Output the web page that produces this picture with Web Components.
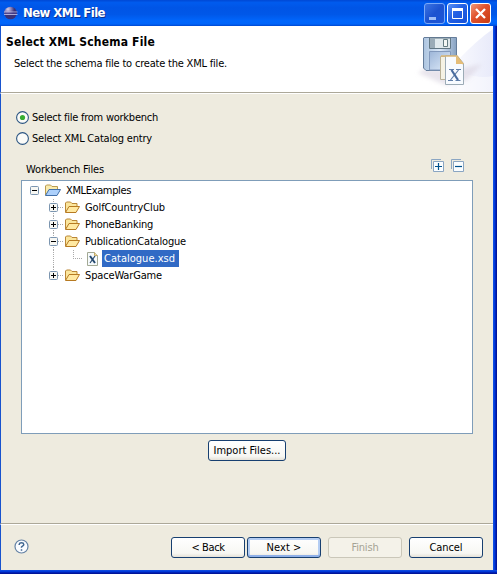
<!DOCTYPE html>
<html lang="en"><head><meta charset="utf-8"><title>New XML File</title>
<style>
body{margin:0;width:497px;height:574px;overflow:hidden;font:11px/14px "DejaVu Sans Condensed","DejaVu Sans",sans-serif;font-stretch:condensed;color:#000}
</style></head><body>
<wizard-window></wizard-window>
<script>
const define=(name,html,init)=>customElements.define(name,class extends HTMLElement{
  connectedCallback(){
    if(this.shadowRoot)return;
    this.attachShadow({mode:'open'}).innerHTML=html;
    if(init)init(this,this.shadowRoot);
  }
});

/* A one-line label whose letter spacing is adjusted to reach the given width. */
define('fit-label','<style>:host{display:inline-block;white-space:nowrap}</style><span><slot></slot></span>',(el,root)=>{
  const s=root.querySelector('span'),w=+el.getAttribute('w'),n=el.textContent.length;
  el.style.width=w+'px';
  s.style.letterSpacing=((w-s.getBoundingClientRect().width)/n)+'px';
});

define('caption-button',`<style>
:host{display:block;box-sizing:border-box;width:21px;height:21px;border:1px solid #fff;border-radius:3px;background:linear-gradient(135deg,#5a90f5,#2360e4 45%,#1550d8)}
:host([kind=min]){border-color:#7aa8f8;background:linear-gradient(135deg,#3b74e4,#1c52d0 50%,#1c55d8)}
:host([kind=close]){background:linear-gradient(135deg,#f09878,#e0512c 45%,#c83c14)}
svg{display:block}</style><svg width="19" height="19"></svg>`,(el,r)=>{
  r.querySelector('svg').innerHTML={min:'<path d="M4 14.5h7" stroke="#9dbdf8" stroke-width="3"/>',
  max:'<path d="M4.5 5v9.500h10V5z" fill="none" stroke="#fff"/><path d="M4 5.500h11" stroke="#fff" stroke-width="3"/>',
  close:'<path d="M5 5l9 9M14 5l-9 9" stroke="#fff" stroke-width="2.300"/>'}[el.getAttribute('kind')];
});

define('title-bar',`<style>
:host{display:flex;align-items:center;height:26px;box-sizing:border-box;padding:0 6px 0 4px;background:linear-gradient(#0048d4,#005bee 10%,#0055e6 30%,#0057e8 55%,#0066fc 80%,#0065fa 92%,#0048d0)}
fit-label{margin-left:5px;font:bold 13px/20px "DejaVu Sans Condensed","DejaVu Sans",sans-serif;color:#fff;text-shadow:1px 1px #0a318f}
.b{display:flex;gap:2px;margin-left:auto}</style>
<svg width="14" height="14" viewBox="0 0 14 14"><defs><radialGradient id="g" cx=".3" cy=".2"><stop offset="0" stop-color="#d4cee8"/><stop offset=".5" stop-color="#8b82b8"/><stop offset="1" stop-color="#3a3278"/></radialGradient></defs><circle cx="6.500" cy="7" r="6.300" fill="url(#g)"/><path d="M0 6h13.500M0 8.500h13.500" stroke="#c8c8ec" stroke-width=".8"/><path d="M1 7.200h12" stroke="#443c8c"/></svg>
<fit-label w="82">New XML File</fit-label>
<div class="b"><caption-button kind="min"></caption-button><caption-button kind="max"></caption-button><caption-button kind="close"></caption-button></div>`);

define('wizard-header',`<style>
:host{display:flex;justify-content:space-between;height:67px;box-sizing:border-box;border-bottom:1px solid #aca899;background:#fff}
.t{display:flex;flex-direction:column;padding:8px 0 0 5px}
h1{margin:0;height:16px;font:bold 12px/16px "DejaVu Sans Condensed","DejaVu Sans",sans-serif}
p{margin:7px 0 0 8px}svg{display:block}</style>
<div class="t"><h1><fit-label w="149">Select XML Schema File</fit-label></h1><p><fit-label w="213">Select the schema file to create the XML file.</fit-label></p></div>
<svg width="83" height="66" viewBox="410 26 83 66">
<defs><linearGradient id="s" x1="0" x2="1"><stop offset="0" stop-color="#fff"/><stop offset="1" stop-color="#e8eafa"/></linearGradient><linearGradient id="f"><stop offset="0" stop-color="#acc4df"/><stop offset=".5" stop-color="#dbe8f8"/><stop offset="1" stop-color="#86a1c1"/></linearGradient><linearGradient id="m" x1="0" y1="0" x2="1" y2="1"><stop offset="0" stop-color="#9db6d8"/><stop offset="1" stop-color="#e1edfb"/></linearGradient><filter id="b"><feGaussianBlur stdDeviation="2"/></filter></defs>
<path d="M458 60Q477 40 493 29V92H443Z" fill="url(#s)"/><path d="M463 73Q480 79 493 76V92H455Z" fill="#fff" opacity=".45"/>
<path d="M418 73l6-4h36l22-5-15 16-22 5z" fill="#d9d3e0" opacity=".6" filter="url(#b)"/>
<path d="M424 37.500h32.500V70.500H426l-2.500-2.500V38z" fill="url(#f)" stroke="#657d9b"/>
<path d="M429.500 38h21v10.500h-21z" fill="#e0e9ed" stroke="#617784"/><path d="M430 38h5v10h-5z" fill="#9aabb7"/><path d="M443.500 39.500h4v7h-4z" fill="#f4f7f5" stroke="#657d83"/>
<path d="M429.500 70V51.500h21V70z" fill="url(#m)" stroke="#8299bc"/>
<path d="M440.500 56.500h16v23h-16z" fill="#f5f2e4" stroke="#b9b197"/>
<path d="M445.500 55.500H457l6.500 8V84.500h-18z" fill="#f8fbff" stroke="#9cabb6"/><path d="M441 56h16l6 8" fill="none" stroke="#d9b777" stroke-width="1.300"/><path d="M456 56v8h8z" fill="#e5bd78"/>
<path d="M449 69.500h5M456 69.500h5M448 80.500h5M455.500 80.500h5M458.500 70l-8 10" stroke="#617fa9" stroke-width="1.200"/><path d="M451.500 70l6.500 10" stroke="#496c9e" stroke-width="2.200"/>
</svg>`);

define('radio-option',`<style>:host{display:flex;align-items:center;gap:3px;height:14px}svg{display:block}::slotted(*){padding-top:1px}</style>
<svg width="13" height="13"><circle cx="6.500" cy="6.500" r="5.900" fill="#fbfbf8" stroke="#2b5582" stroke-width="1.100"/><circle class="d" cx="6.500" cy="6.500" r="2.600" fill="#37ad31"/></svg><slot></slot>`,(el,r)=>{if(!el.hasAttribute('checked'))r.querySelector('.d').remove()});

const folder='<path d="M1.500 12V3l1-1h4l1.500 1.500h5v3" fill="#fbe69d" stroke="#ba8736"/><path d="M1.500 12.500L5 6.500h10.500L12 12.500z" fill="#ffe9a2" stroke="#b77a22"/>';
define('tree-row',`<style>
:host{display:flex;align-items:center;height:17px}
svg{display:block;flex:none}
.l{display:block;box-sizing:border-box;height:17px;padding:1px 0 0 1px;line-height:16px}
:host([selected]) .l{background:#316ac5;color:#fff;padding:1px 4px 0 2px;margin-left:-2px}
:host([kind=root]) .l{padding-left:2px}
.i{margin-right:2px}</style><svg class="c" height="17"></svg><svg class="i" width="18" height="17" viewBox="0 -1 18 17"></svg><span class="l"><slot></slot></span>`,(el,r)=>{
  const k=el.getAttribute('kind'),c=r.querySelector('.c'),i=r.querySelector('.i');
  const box=(x,p)=>`<rect x="${x+.5}" y="4.500" width="8" height="8" rx="1" fill="#f7f7f3" stroke="#7b95b0"/><path d="M${x+2} 8.500h5${p?`M${x+4.5} 6v5`:''}" stroke="#000"/>`;
  const dots=d=>`<path d="${d}" stroke="#aaa" stroke-dasharray="1 1"/>`;
  const w={root:22,closed:42,open:42,last:42,file:62}[k];
  c.setAttribute('width',w);
  c.innerHTML=k=='root'?box(8,false):k=='file'?dots('M31.500 0v17M51.500 0v8.500M51 8.500h10'):dots(`M31.500 0v${k=='last'?9:17}M36 8.500h6`)+box(27,k!='open');
  i.innerHTML=k=='file'?'<path d="M3.500 1.500h7l3 3v10h-10z" fill="#f6fafc" stroke="#a3a994"/><path d="M10.500 1.500v3h3" fill="#efdda2" stroke="#c6aa66"/><path d="M6 5l5 7" stroke="#24476e" stroke-width="2"/><path d="M11 5l-5 7" stroke="#24476e" stroke-width="1.200"/>':k=='root'?'<path d="M1.500 12V3l1-1h4l1.500 1.500h5.500v3" fill="#f9ebae" stroke="#ba9b50"/><path d="M1.500 12.500L5 6.500h11.500L13 12.500z" fill="#acd0fb" stroke="#426fa8"/>':folder;
});

define('tool-icon',`<style>:host{display:block}svg{display:block}</style><svg width="13" height="13"><path d="M.5 10V.500H10" fill="none" stroke="#8ba6c3"/><path d="M2.500 2.500h10v10h-10z" fill="#fafdff" stroke="#8aa5c2"/><path stroke="#00518c" stroke-width="1.200"/></svg>`,(el,r)=>r.querySelector('path:last-child').setAttribute('d','M4 7.500h7'+(el.hasAttribute('expand')?'M7.500 4v7':'')));

define('push-button',`<style>
:host{display:flex;align-items:center;justify-content:center;box-sizing:border-box;width:74px;height:21px;padding-top:1px;border:1px solid #173f70;border-radius:3px;background:linear-gradient(#fff,#f7f7f3 80%,#e5e1d7)}
:host([default]){box-shadow:inset 0 -2px #8fb0e8,inset 0 0 0 2px #b4cdf3}
:host([disabled]){border-color:#cac7b9;background:#f4f2e9;color:#a5a394}</style><slot></slot>`);

define('wizard-window',`<style>
:host{display:grid;grid-template-rows:26px 67px 431px 46px;box-sizing:border-box;width:497px;height:574px;background:#eeebdf;position:relative}
title-bar{width:497px}
.x{margin:0 4px 0 0;border-left:1px solid #1853ce}
main{display:flex;flex-direction:column;border-top:1px solid #fff;box-sizing:border-box;border-bottom:1px solid #aca899;padding:16px 20px 0 15px}
radio-option+radio-option{margin-top:7px}
.h{display:flex;justify-content:space-between;align-items:flex-start;margin:14px 9px 0 10px}
.h>fit-label{padding-top:4px;height:13px}.tools{display:flex;gap:7px;width:33px}
.tree{box-sizing:border-box;width:452px;height:254px;margin:4px 0 0 5px;border:1px solid #7f9db9;background:#fff;padding:1px 0 0}
.import{width:78px;margin:6px 0 0 192px}
footer{display:flex;align-items:flex-start;box-sizing:border-box;border-top:1px solid #fff;padding:12px 10px 0 13px}
.help{margin:2px auto 0 0}
.frame{position:absolute;right:0;top:26px;width:4px;height:548px;background:linear-gradient(90deg,#1555e6,#003bdc 40%,#001aab 75%,#00108a)}
.bottom{position:absolute;left:0;right:0;top:570px;height:4px;background:linear-gradient(#1450e0,#003bdc 35%,#001aab 70%,#00108a)}</style>
<title-bar></title-bar>
<wizard-header class="x"></wizard-header>
<main class="x">
<radio-option checked><fit-label w="126">Select file from workbench</fit-label></radio-option>
<radio-option><fit-label w="120">Select XML Catalog entry</fit-label></radio-option>
<div class="h"><fit-label w="78">Workbench Files</fit-label><div class="tools"><tool-icon expand></tool-icon><tool-icon></tool-icon></div></div>
<div class="tree">
<tree-row kind="root"><fit-label w="65">XMLExamples</fit-label></tree-row>
<tree-row kind="closed"><fit-label w="80">GolfCountryClub</fit-label></tree-row>
<tree-row kind="closed"><fit-label w="68">PhoneBanking</fit-label></tree-row>
<tree-row kind="open"><fit-label w="101">PublicationCatalogue</fit-label></tree-row>
<tree-row kind="file" selected><fit-label w="71">Catalogue.xsd</fit-label></tree-row>
<tree-row kind="last"><fit-label w="77">SpaceWarGame</fit-label></tree-row>
</div>
<push-button class="import"><fit-label w="67">Import Files...</fit-label></push-button>
</main>
<footer class="x">
<svg class="help" width="15" height="15"><circle cx="7.500" cy="7.500" r="6.500" fill="#fafcff" stroke="#6482a5" stroke-width="1.200"/><path d="M5.200 6V5.400Q5.400 3.700 7.500 3.700T9.800 5.500Q9.800 6.500 8.500 7.200T7.500 8.800M7.500 10.200v1.500" fill="none" stroke="#416791" stroke-width="1.500"/></svg>
<push-button><fit-label w="33">&lt; Back</fit-label></push-button>
<push-button default style="margin-left:2px"><fit-label w="35">Next &gt;</fit-label></push-button>
<push-button disabled style="margin-left:7px"><fit-label w="27">Finish</fit-label></push-button>
<push-button style="margin-left:7px"><fit-label w="33">Cancel</fit-label></push-button>
</footer>
<div class="frame"></div><div class="bottom"></div>`);
</script></body></html>
